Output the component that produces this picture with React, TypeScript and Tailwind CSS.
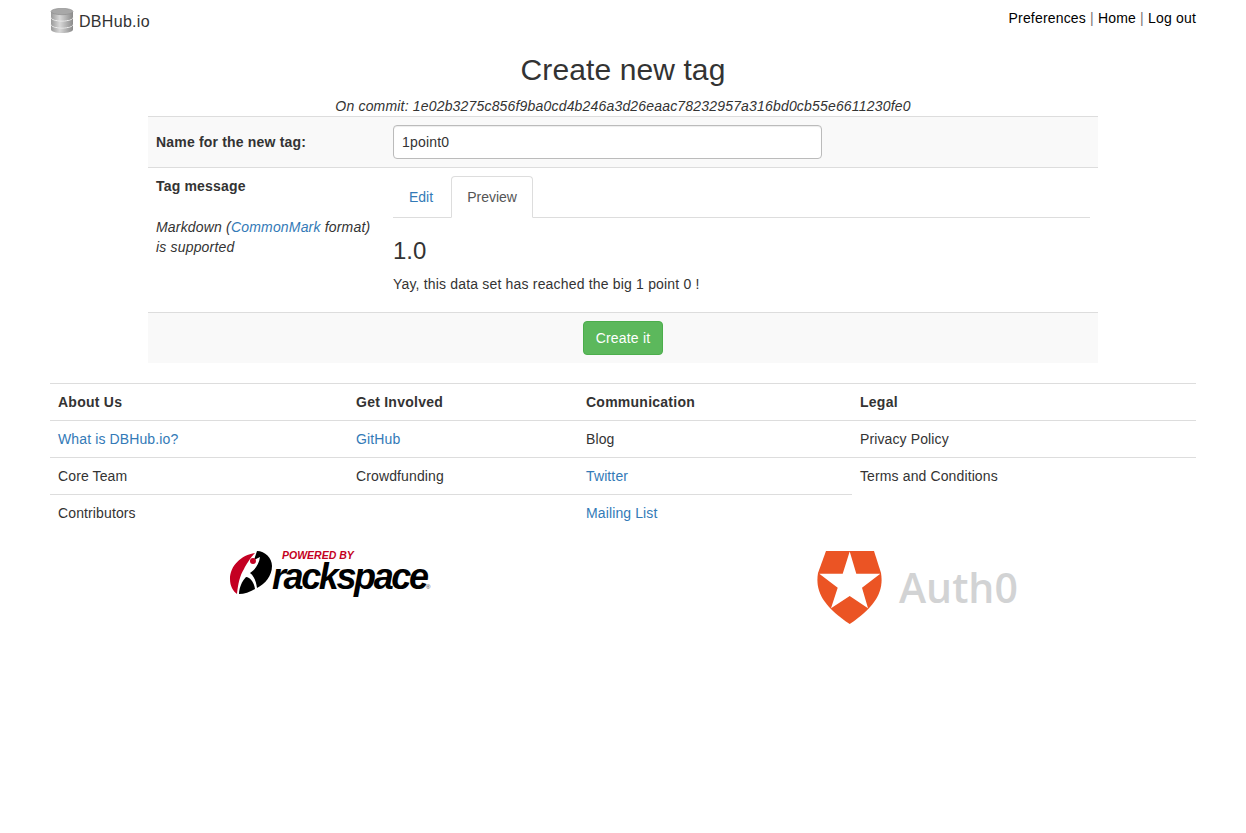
const footerRows = [
    [
        { title: 'About Us', bold: true },
        { title: 'Get Involved', bold: true },
        { title: 'Communication', bold: true },
        { title: 'Legal', bold: true },
    ],
    [
        { title: 'What is DBHub.io?', link: true },
        { title: 'GitHub', link: true },
        { title: 'Blog' },
        { title: 'Privacy Policy' },
    ],
    [{ title: 'Core Team' }, { title: 'Crowdfunding' }, { title: 'Twitter', link: true }, { title: 'Terms and Conditions' }],
    [{ title: 'Contributors' }, { title: '' }, { title: 'Mailing List', link: true }],
];

const DbLogo = () => (
    <svg width="24" height="25" viewBox="0 0 24 25" className="block">
        <defs>
            <linearGradient id="disk" x1="0" x2="1" y1="0" y2="0">
                <stop offset="0" stopColor="#9a9a9a" />
                <stop offset="0.4" stopColor="#d8d8d8" />
                <stop offset="1" stopColor="#8a8a8a" />
            </linearGradient>
        </defs>
        <path d="M1 17v4.500c0 2 4.900 3.500 11 3.500s11-1.500 11-3.500V17z" fill="url(#disk)" />
        <path d="M1 16.500c0 2 4.900 3.500 11 3.500s11-1.500 11-3.500" fill="none" stroke="#f0f0f0" strokeWidth="1" />
        <path d="M1 10v6c0 2 4.900 3.500 11 3.500s11-1.500 11-3.500v-6z" fill="url(#disk)" />
        <path d="M1 9.500c0 2 4.900 3.500 11 3.500s11-1.500 11-3.500" fill="none" stroke="#f0f0f0" strokeWidth="1" />
        <path d="M1 4v5c0 2 4.900 3.500 11 3.500S23 11 23 9V4z" fill="url(#disk)" />
        <ellipse cx="12" cy="3.500" rx="11" ry="3.200" fill="#a8a8a8" stroke="#8c8c8c" strokeWidth="0.6" />
    </svg>
);

const RackspaceLogo = () => (
    <div className="relative h-[46px] w-[202px]">
        <svg width="44" height="44" viewBox="0 0 44 44" className="absolute top-0 left-0">
            <path d="M26 2C12 4 1 15 1 28c0 7 3 12 7 15 1-10 3-19 7-25 2-4 6-11 11-16z" fill="#c40022" />
            <path d="M28 0c8 0 15 7 15 15 0 10-7 18-15 22-1-7-3-12-7-15 5-3 9-9 10-16l-6 3c1-3 2-6 3-9z" fill="#000" />
            <path d="M17 26c4 0 8 5 9 12-5 3-11 5-16 5 0-6 3-13 7-17z" fill="#000" />
            <circle cx="24" cy="10" r="3" fill="#c40022" />
        </svg>
        <span className="absolute top-[-3px] left-[53px] text-[10.5px] leading-[14px] font-bold tracking-normal text-[#c40022] italic">POWERED BY</span>
        <span className="absolute top-[12px] left-[43px] text-[36px] leading-[28px] font-bold tracking-[-2.4px] text-black italic">rackspace</span>
        <span className="absolute top-[32px] left-[197px] text-[6px] leading-[8px] tracking-normal text-[#333]">®</span>
    </div>
);

const AuthLogo = () => (
    <div className="flex h-[73px] w-[201px] items-center gap-[17px]">
        <svg width="65" height="73" viewBox="0 0 65 73" className="shrink-0">
            <path d="M9 0h48l7 22c3 18-5 33-31.300 51C6 55-2 40 1 22z" fill="#eb5424" />
            <path
                d="M32.700 0.500 39.300 22.700H63.300L45 36.700 51 57.300 32.700 45 14 57.300 20.700 36.700 2.300 22.700H25.700z"
                fill="#fff"
            />
        </svg>
        <span className="font-['Open_Sans',sans-serif] text-[41px] leading-[73px] font-semibold tracking-normal text-[#d2d3d4]">Auth0</span>
    </div>
);

const App = () => {
    return (
        <div className="min-h-[833px] bg-white font-['Liberation_Sans',Arial,sans-serif] text-[14px] leading-[20px] tracking-[0.18px] text-[#333]">
            <div className="mx-auto w-[1146px]">
                {/* Top bar */}
                <div className="flex h-[42px] justify-between">
                    <div className="flex items-start pt-[8px]">
                        <DbLogo />
                        <span className="mt-[1px] ml-[5px] text-[16px] leading-[26px] tracking-[0.3px]">DBHub.io</span>
                    </div>
                    <div className="pt-[8px] text-[#777]">
                        <span className="text-black">Preferences</span> | <span className="text-black">Home</span> |{' '}
                        <span className="text-black">Log out</span>
                    </div>
                </div>

                <h1 className="mt-[10px] text-center text-[30px] leading-[35px] font-normal tracking-[0.1px]">Create new tag</h1>
                <div className="mt-[9px] text-center italic">On commit: 1e02b3275c856f9ba0cd4b246a3d26eaac78232957a316bd0cb55e6611230fe0</div>

                {/* Form table */}
                <div className="mx-auto w-[950px]">
                    <div className="flex h-[51px] items-center border-t border-[#ddd] bg-[#f9f9f9] px-[8px]">
                        <div className="w-[237px] font-bold">Name for the new tag:</div>
                        <div className="flex h-[34px] w-[429px] items-center rounded-[4px] border border-[#bbb] bg-white px-[8px] text-[#333] shadow-[inset_0_1px_1px_rgba(0,0,0,0.075)]">
                            1point0
                        </div>
                    </div>
                    <div className="flex h-[145px] border-t border-[#ddd] px-[8px] pt-[8px]">
                        <div className="w-[237px]">
                            <div className="font-bold">Tag message</div>
                            <div className="mt-[21px] italic">
                                Markdown (<span className="text-[#337ab7]">CommonMark</span> format)
                                <br />
                                is supported
                            </div>
                        </div>
                        <div className="flex-1">
                            <div className="flex h-[42px] border-b border-[#ddd] tracking-normal">
                                <div className="flex h-[41px] items-center px-[16px] text-[#337ab7]">Edit</div>
                                <div className="ml-[2px] flex h-[42px] items-center rounded-t-[4px] border border-[#ddd] border-b-white bg-white px-[15px] text-[#555]">
                                    Preview
                                </div>
                            </div>
                            <div className="mt-[20px] text-[24px] leading-[26px] tracking-normal">1.0</div>
                            <p className="mt-[10px]">Yay, this data set has reached the big 1 point 0 !</p>
                        </div>
                    </div>
                    <div className="flex h-[51px] items-center justify-center border-t border-[#ddd] bg-[#f9f9f9]">
                        <button className="h-[34px] w-[80px] rounded-[4px] border border-[#4cae4c] bg-[#5cb85c] text-white">Create it</button>
                    </div>
                </div>

                {/* Footer */}
                <div className="mt-[20px] grid grid-cols-[298px_230px_274px_344px]">
                    {footerRows.map((row) =>
                        row.map((cell, i) => (
                            <div
                                key={`${row[0].title}-${i}`}
                                className={`h-[37px] border-t border-[#ddd] px-[8px] pt-[8px] ${cell.bold ? 'font-bold tracking-[0.25px]' : 'tracking-[0.12px]'} ${cell.link ? 'text-[#337ab7]' : ''}`}
                            >
                                {cell.title}
                            </div>
                        )),
                    )}
                </div>

                {/* Sponsors */}
                <div className="mt-[20px] flex">
                    <div className="w-[558px] pl-[179px]">
                        <RackspaceLogo />
                    </div>
                    <div className="pl-[209px]">
                        <AuthLogo />
                    </div>
                </div>
            </div>
        </div>
    );
};

export default App;
